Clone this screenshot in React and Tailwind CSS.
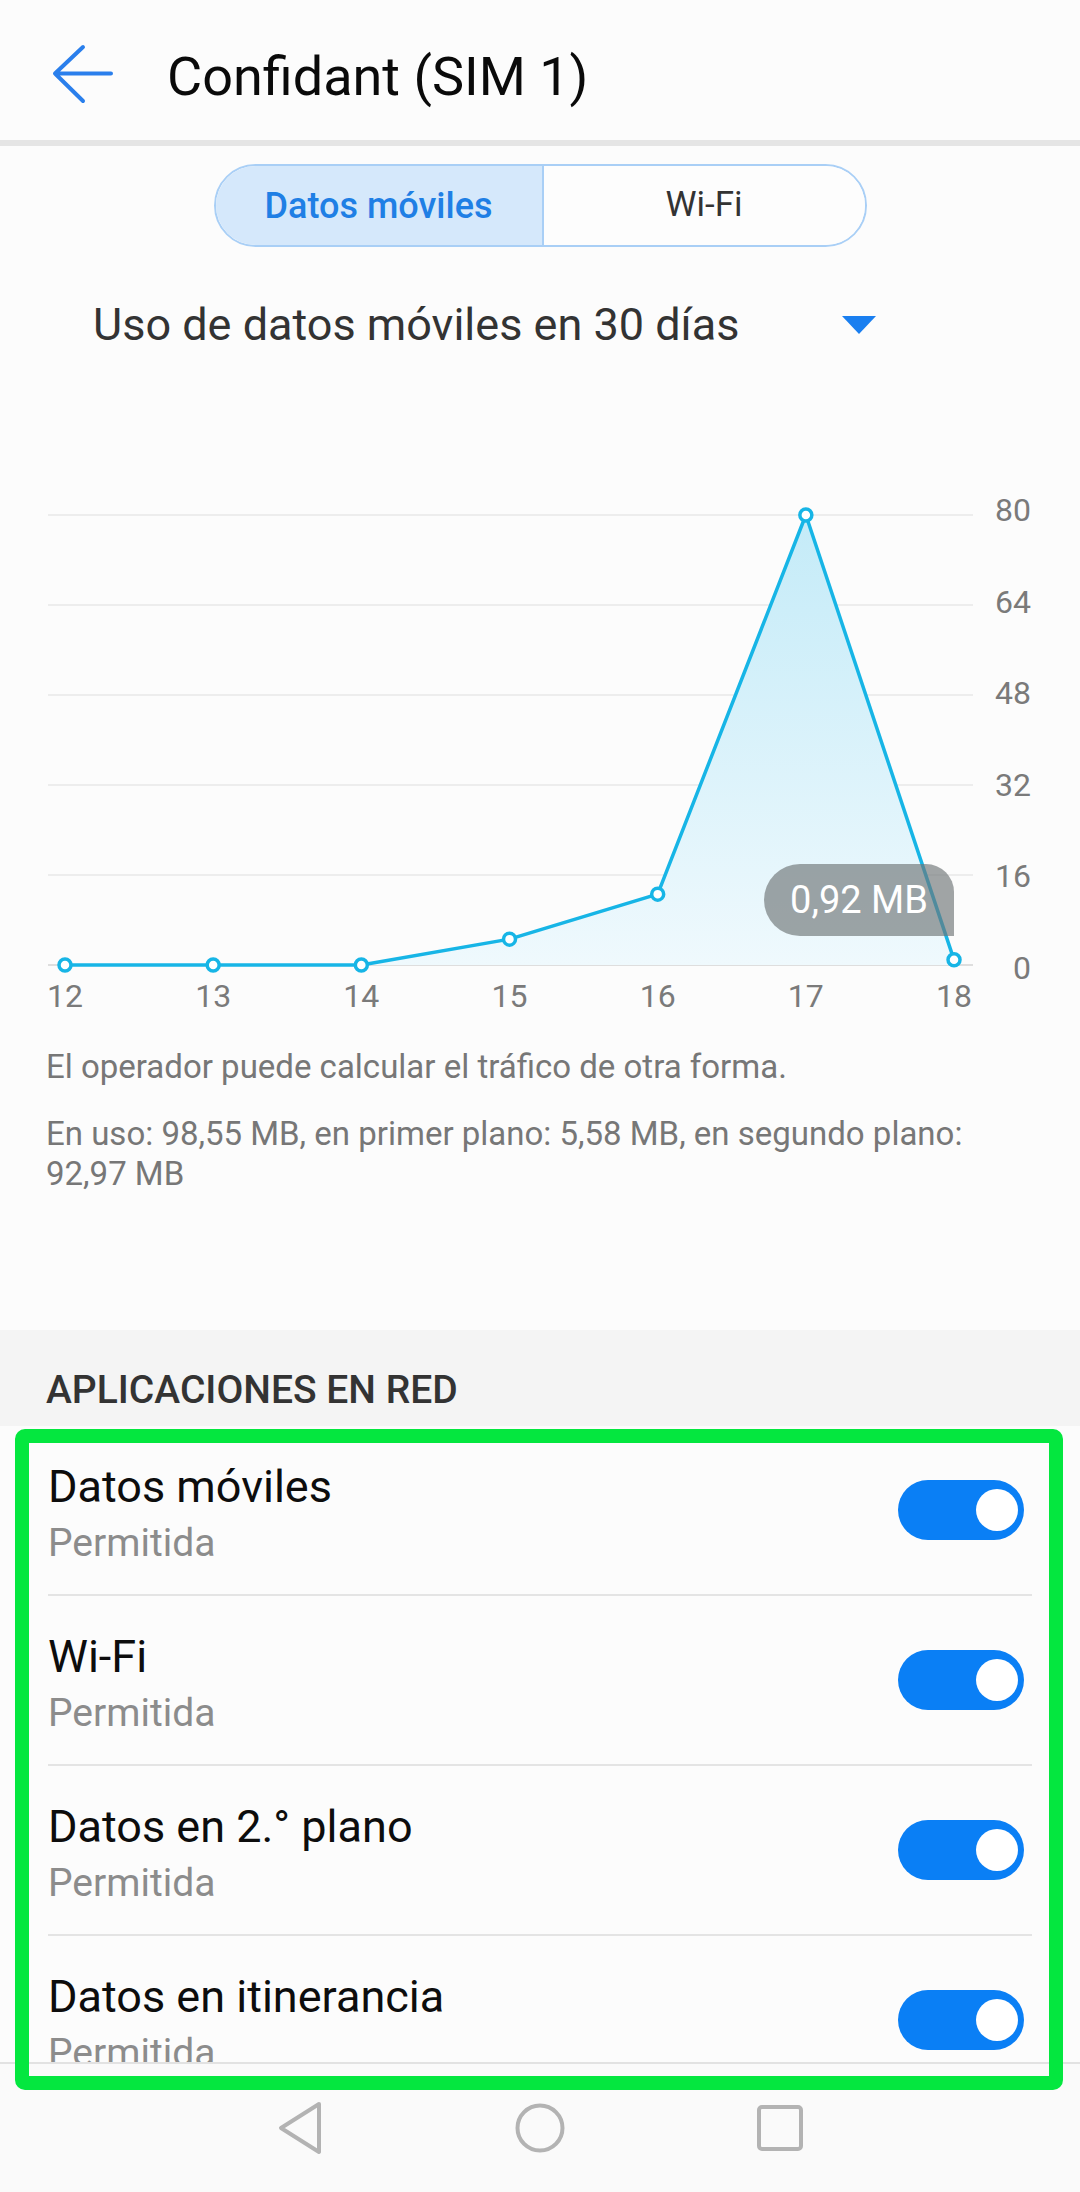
import React from "react";

const values = [0, 0, 0, 4.6, 12.6, 80, 0.92];
const xLabels = ["12", "13", "14", "15", "16", "17", "18"];
const yLabels = ["80", "64", "48", "32", "16", "0"];
const px = (i) => 65 + i * 148.17;
const py = (v) => 485 - v * 5.625;

function Chart() {
  const pts = values.map((v, i) => [px(i), py(v)]);
  const line = pts.map((p) => p.join(",")).join(" ");
  const area = `${px(0)},485 ${line} ${px(6)},485`;
  return (
    <div className="relative mt-[127px] h-[540px] w-[1080px]">
      <svg width="1080" height="540" viewBox="0 0 1080 540" className="block" fontFamily="Roboto, sans-serif">
        <defs>
          <linearGradient id="fillg" x1="0" y1="35" x2="0" y2="485" gradientUnits="userSpaceOnUse">
            <stop offset="0" stopColor="#c4ebf8" />
            <stop offset="1" stopColor="#eff9fd" />
          </linearGradient>
        </defs>
        {yLabels.map((l, i) => (
          <g key={l}>
            <line x1="48" x2="973" y1={35 + i * 90} y2={35 + i * 90} stroke={i === 5 ? "#dedede" : "#ededed"} strokeWidth="2" />
            <text x="1031" y={41 + i * 91.6} textAnchor="end" fontSize="32" fill="#7a7a7a">
              {l}
            </text>
          </g>
        ))}
        <polygon points={area} fill="url(#fillg)" />
        <polyline points={line} fill="none" stroke="#17b5e6" strokeWidth="3.5" strokeLinejoin="round" />
        {pts.map(([x, y], i) => (
          <circle key={i} cx={x} cy={y} r="6" fill="#ffffff" stroke="#17b5e6" strokeWidth="3.5" />
        ))}
        {xLabels.map((l, i) => (
          <text key={l} x={px(i)} y="527" textAnchor="middle" fontSize="32" fill="#7a7a7a">
            {l}
          </text>
        ))}
      </svg>
      <div className="absolute left-[764px] top-[384px] flex h-[72px] w-[190px] items-center justify-center rounded-l-[36px] rounded-tr-[28px] bg-[#6f7477]/65 text-[38px] leading-none text-white">
        0,92 MB
      </div>
    </div>
  );
}

function Row({ title, last }) {
  return (
    <>
      <div className="flex h-[168px] items-center justify-between">
        <div className="mt-[6px] flex flex-col">
          <div className="text-[45px] leading-[52px] text-[#0d0d0d]">{title}</div>
          <div className="mt-[7px] text-[39px] leading-[46px] text-[#8c8c8c]">Permitida</div>
        </div>
        <div className="mr-[8px] flex h-[60px] w-[126px] items-center justify-end rounded-full bg-[#0a7ff5] pr-[6px]">
          <div className="h-[42px] w-[42px] rounded-full bg-white" />
        </div>
      </div>
      {!last && <div className="h-[2px] bg-[#e4e4e4]" />}
    </>
  );
}

export default function App() {
  return (
    <div className="relative flex h-[2192px] w-[1080px] flex-col overflow-hidden bg-[#fcfcfc] font-['Roboto',sans-serif]">
      <div className="flex-1 overflow-hidden">
        {/* header */}
        <div className="flex h-[140px] items-start pl-[52px]">
          <svg className="mt-[44px] shrink-0" width="62" height="60" viewBox="0 0 62 60">
            <path d="M31 3 L3 29.5 L31 57 M3 29.5 H59" fill="none" stroke="#2a7fec" strokeWidth="4" strokeLinecap="round" strokeLinejoin="round" />
          </svg>
          <div className="ml-[53px] mt-[47px] text-[54px] leading-[60px] text-[#0a0a0a]">Confidant (SIM 1)</div>
        </div>
        <div className="h-[6px] bg-[#e5e5e5]" />

        {/* segmented */}
        <div className="mt-[18px] flex justify-center">
          <div className="flex h-[83px] w-[653px] overflow-hidden rounded-full border-2 border-[#a9cff6]">
            <div className="flex w-[328px] items-center justify-center border-r-2 border-[#a9cff6] bg-[#d5e8fb] text-[36px] font-medium text-[#1f7fe5]">
              Datos móviles
            </div>
            <div className="flex flex-1 items-center justify-center bg-[#fdfdfd] text-[35px] text-[#333333]">Wi-Fi</div>
          </div>
        </div>

        {/* dropdown */}
        <div className="mt-[50px] flex items-center justify-between pl-[93px] pr-[204px]">
          <div className="text-[45px] leading-[56px] text-[#333333]">Uso de datos móviles en 30 días</div>
          <svg width="34" height="18" viewBox="0 0 34 18">
            <polygon points="0,0 34,0 17,18" fill="#1a7ff0" />
          </svg>
        </div>

        <Chart />

        <div className="mt-[27px] px-[46px] text-[33px] leading-[40px] text-[#777777]">
          El operador puede calcular el tráfico de otra forma.
        </div>
        <div className="mt-[27px] px-[46px] text-[33px] leading-[40px] text-[#777777]">
          En uso: 98,55 MB, en primer plano: 5,58 MB, en segundo plano: 92,97 MB
        </div>

        <div className="mt-[136px] h-[96px] bg-[#f4f4f4] pl-[46px] pt-[38px] text-[39px] font-medium leading-[44px] text-[#333333]">
          APLICACIONES EN RED
        </div>

        <div className="px-[48px]">
          <Row title="Datos móviles" />
          <Row title="Wi-Fi" />
          <Row title="Datos en 2.° plano" />
          <Row title="Datos en itinerancia" last />
        </div>
      </div>

      {/* nav bar */}
      <div className="flex h-[130px] shrink-0 items-center justify-center border-t-2 border-[#e2e2e2] bg-[#fafafa]">
        <div className="flex w-[240px] justify-center">
          <svg width="46" height="54" viewBox="0 0 46 54">
            <path d="M42 3 L4 27 L42 51 Z" fill="none" stroke="#b3b3b3" strokeWidth="4" strokeLinejoin="round" />
          </svg>
        </div>
        <div className="flex w-[240px] justify-center">
          <svg width="52" height="52" viewBox="0 0 52 52">
            <circle cx="26" cy="26" r="22.5" fill="none" stroke="#b3b3b3" strokeWidth="4" />
          </svg>
        </div>
        <div className="flex w-[240px] justify-center">
          <svg width="48" height="48" viewBox="0 0 48 48">
            <rect x="3" y="3" width="42" height="42" rx="3" fill="none" stroke="#b3b3b3" strokeWidth="4" />
          </svg>
        </div>
      </div>

      {/* green highlight annotation */}
      <div className="pointer-events-none absolute left-[15px] top-[1429px] h-[661px] w-[1048px] rounded-[10px] border-[14px] border-[#04e73f]" />
    </div>
  );
}
